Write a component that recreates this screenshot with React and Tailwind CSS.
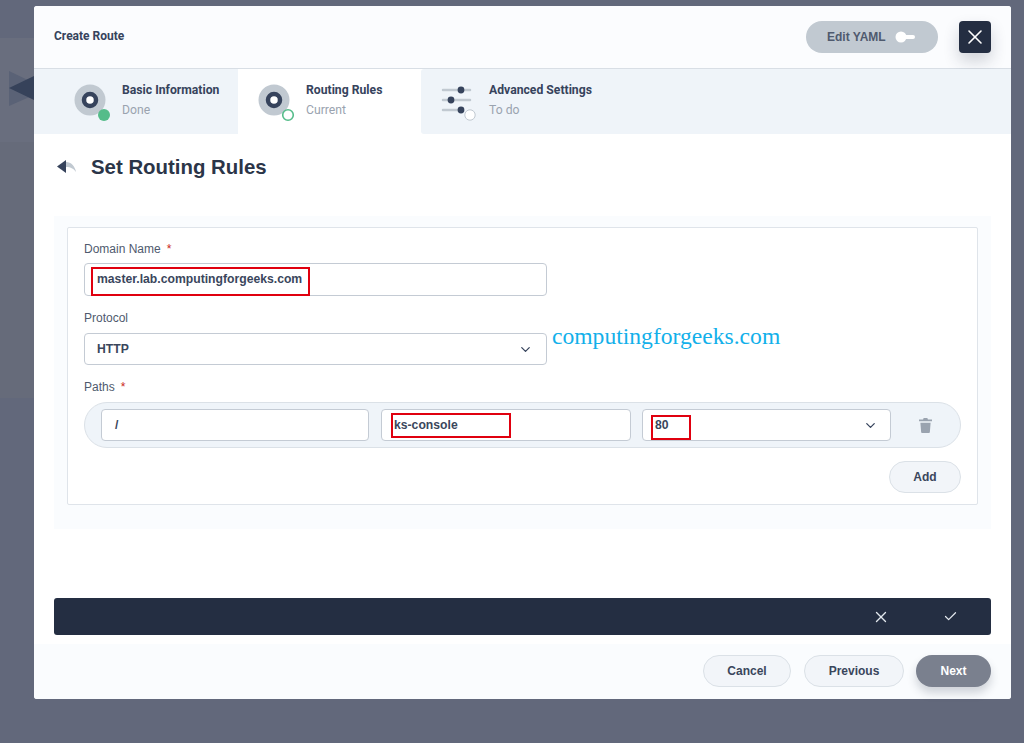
import React from "react";
import { X, Check, ChevronDown } from "lucide-react";

const formFont = "font-['Liberation_Sans',Arial,sans-serif]";

function StepIcon({ ring }) {
  return (
    <svg width="42" height="42" viewBox="0 0 42 42" className="shrink-0 mt-[15px]">
      <circle cx="16" cy="16" r="15.5" fill="#c1c9d1" />
      <circle cx="16" cy="16" r="6" fill="#fff" stroke="#36435c" strokeWidth="4.5" />
      {ring ? (
        <circle cx="30" cy="31" r="5.3" fill="#fff" stroke="#55bc8a" strokeWidth="1.6" />
      ) : (
        <circle cx="30" cy="31" r="6" fill="#55bc8a" />
      )}
    </svg>
  );
}

function SlidersIcon() {
  return (
    <svg width="42" height="42" viewBox="0 0 42 42" className="shrink-0 mt-[15px]">
      <g stroke="#c1c9d1" strokeWidth="2.5" strokeLinecap="round">
        <path d="M2 6h15M24 6h5" />
        <path d="M2 16h4M13 16h16" />
        <path d="M2 26h15" />
      </g>
      <circle cx="20" cy="6" r="3.4" fill="#36435c" />
      <circle cx="10" cy="16" r="3.4" fill="#36435c" />
      <circle cx="20" cy="26" r="3.4" fill="#36435c" />
      <circle cx="29" cy="31" r="5.2" fill="#fff" stroke="#c1c9d1" strokeWidth="1" />
    </svg>
  );
}

function BackIcon() {
  return (
    <svg width="20" height="16" viewBox="0 0 20 16">
      <path d="M9 3c5 0 9 4 10 10-2-3-5-5-10-5z" fill="#c1c9d1" />
      <path d="M9 1v13L0 7.5z" fill="#36435c" />
    </svg>
  );
}

function TrashIcon() {
  return (
    <svg width="13" height="15" viewBox="0 0 14 16" className="ml-[28px]">
      <path d="M5 0h4l.6 1.5H14v2H0v-2h4.4z" fill="#9aa3af" />
      <path d="M1.5 5h11l-.8 10a1 1 0 0 1-1 1H3.3a1 1 0 0 1-1-1z" fill="#9aa3af" />
    </svg>
  );
}

function Step({ icon, title, status, active, className }) {
  return (
    <div className={`flex items-start h-[65px] ${active ? "bg-white" : "bg-[#eff4f9]"} ${className}`}>
      {icon}
      <div className="font-['Roboto',sans-serif] text-[12.2px] leading-[20px] ml-[6px] mt-[11px]">
        <div className="font-bold text-[#36435c] whitespace-nowrap">{title}</div>
        <div className="text-[#9aa3af]">{status}</div>
      </div>
    </div>
  );
}

function RedBox({ className }) {
  return <div className={`absolute border-2 border-[#e0000f] ${className}`}></div>;
}

function Field({ className, children }) {
  return (
    <div className={`relative flex items-center justify-between bg-white border border-[#c4cbd4] rounded-[4px] text-[12.2px] font-bold text-[#3a465c] ${className}`}>
      {children}
    </div>
  );
}

function Label({ children, required, className }) {
  return (
    <div className={`text-[12px] leading-[16px] text-[#4f5a6e] ${className}`}>
      {children}
      {required && <span className="text-[#ca2621] ml-[6px]">*</span>}
    </div>
  );
}

function PillButton({ children, className }) {
  return (
    <button className={`h-[32px] rounded-full border border-[#dbe1e7] bg-[#f2f5f9] text-[12px] font-bold text-[#3a465c] ${className}`}>
      {children}
    </button>
  );
}

export default function App() {
  return (
    <div className={`relative w-[1024px] h-[743px] overflow-hidden bg-[#62687b] pt-[6px] pl-[34px] ${formFont}`}>
      <div className="absolute left-0 top-[38px] w-[34px] h-[104px] bg-[#696e7e]"></div>
      <div className="absolute left-0 top-[142px] w-[34px] h-[256px] bg-[#666b7a]"></div>
      <svg width="34" height="40" viewBox="0 0 34 40" className="absolute left-0 top-[69px]">
        <path d="M9 2l25 12v12L9 37z" fill="#5a6276" />
        <path d="M9 19L34 7v24z" fill="#36425a" />
      </svg>

      <div className="relative w-[977px] h-[693px] bg-white rounded-[3px] flex flex-col">
        <div className="flex items-center justify-between h-[63px] px-[20px] bg-[#fbfcfe] border-b border-[#d8dee5] rounded-t-[3px]">
          <div className="font-['Roboto',sans-serif] font-bold text-[12px] text-[#36435c] mb-[2px]">Create Route</div>
          <div className="flex items-center gap-[21px]">
            <div className="flex items-center h-[32px] w-[132px] pl-[21px] rounded-full bg-[#c1c9d1] text-[12px] font-bold text-[#4f5a6e]">
              Edit YAML
              <svg width="20" height="12" viewBox="0 0 20 12" className="ml-[9px]">
                <rect x="6" y="4" width="14" height="4" rx="2" fill="#fff" />
                <circle cx="6" cy="6" r="5.5" fill="#fff" />
              </svg>
            </div>
            <button className="flex items-center justify-center w-[32px] h-[32px] rounded-[4px] bg-[#242e42] text-white shadow-[0_8px_16px_rgba(36,46,66,0.2)]">
              <X size={24} strokeWidth={1.6} />
            </button>
          </div>
        </div>

        <div className="flex">
          <Step className="w-[204px] pl-[40px]" icon={<StepIcon />} title="Basic Information" status="Done" />
          <Step className="w-[183px] pl-[20px]" icon={<StepIcon ring />} title="Routing Rules" status="Current" active />
          <Step className="flex-1 pl-[20px] rounded-l-[3px]" icon={<SlidersIcon />} title="Advanced Settings" status="To do" />
        </div>

        <div className="flex items-center h-[66px] pl-[23px]">
          <BackIcon />
          <h1 className="ml-[14px] text-[20.4px] font-bold text-[#2b3548]">Set Routing Rules</h1>
        </div>

        <div className="mx-[20px] mt-[16px] h-[313px] bg-[#fafcfe] pt-[11px] px-[13px]">
          <div className="h-[278px] bg-white border border-[#dfe4ea] rounded-[2px] px-[16px] pt-[13px]">
            <Label required>Domain Name</Label>
            <Field className="w-[463px] h-[33px] mt-[6px] pl-[12px]">
              master.lab.computingforgeeks.com
              <RedBox className="left-[6px] top-[3px] w-[219px] h-[29px]" />
            </Field>
            <Label className="mt-[14px]">Protocol</Label>
            <Field className="w-[463px] h-[32px] mt-[7px] pl-[12px] pr-[13px]">
              HTTP
              <ChevronDown size={15} className="text-[#36435c]" />
            </Field>
            <Label required className="mt-[14px]">Paths</Label>
            <div className="flex items-center w-[877px] h-[46px] mt-[7px] pl-[16px] rounded-full bg-[#eff4f9] border border-[#dbe1e7]">
              <Field className="w-[268px] h-[32px] pl-[13px]"><span>/</span></Field>
              <Field className="w-[250px] h-[32px] ml-[12px] pl-[12px]">
                ks-console
                <RedBox className="left-[9px] top-[3px] w-[120px] h-[25px]" />
              </Field>
              <Field className="w-[249px] h-[32px] ml-[11px] pl-[12px] pr-[12px]">
                80
                <ChevronDown size={15} className="text-[#36435c]" />
                <RedBox className="left-[8px] top-[5px] w-[40px] h-[25px]" />
              </Field>
              <TrashIcon />
            </div>
            <div className="flex justify-end mt-[13px] w-[877px]">
              <PillButton className="w-[72px]">Add</PillButton>
            </div>
          </div>
        </div>

        <div className="flex items-center justify-end mx-[20px] mt-[69px] h-[37px] bg-[#242e42] rounded-[3px] text-[#e3e8ee]">
          <X size={18} strokeWidth={1.8} className="mr-[53px]" />
          <Check size={15} strokeWidth={2} className="mr-[33px]" />
        </div>

        <div className="flex items-start justify-end flex-1 mt-[9px] pt-[11px] pr-[20px] gap-[12px] bg-[#fafcfe] rounded-b-[3px]">
          <PillButton className="w-[88px] mr-[1px]">Cancel</PillButton>
          <PillButton className="w-[100px]">Previous</PillButton>
          <button className="w-[75px] h-[32px] rounded-full bg-[#7a808e] text-white text-[12px] font-bold shadow-[0_6px_10px_rgba(36,46,66,0.2)]">Next</button>
        </div>
      </div>

      <div className="absolute left-[552px] top-[322px] font-['Liberation_Serif',serif] text-[23.6px] leading-[28px] text-[#12b0ea]">computingforgeeks.com</div>
    </div>
  );
}
